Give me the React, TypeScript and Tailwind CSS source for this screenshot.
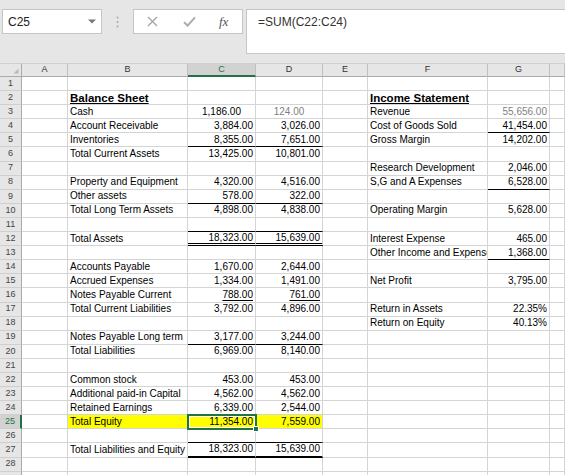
import React from 'react';

type Cell = {
  v?: string;
  a?: 'l' | 'r' | 'c';
  b?: boolean; // bold heading
  g?: boolean; // gray text
  bb?: 't' | 'd' | 'k'; // bottom border: thin, double, thick
  u?: boolean; // text underline
  y?: boolean; // yellow fill
};

const cols = ['A', 'B', 'C', 'D', 'E', 'F', 'G', 'H'];
const ROWS = 29;

const n = (v: string, extra: Partial<Cell> = {}): Cell => ({ v, a: 'r', ...extra });
const t = (v: string, extra: Partial<Cell> = {}): Cell => ({ v, a: 'l', ...extra });

const data: Record<number, Record<string, Cell>> = {
  2: { B: t('Balance Sheet', { b: true }), F: t('Income Statement', { b: true }) },
  3: { B: t('Cash'), C: { v: '1,186.00', a: 'c' }, D: { v: '124.00', a: 'c', g: true }, F: t('Revenue'), G: n('55,656.00', { g: true }) },
  4: { B: t('Account Receivable'), C: n('3,884.00'), D: n('3,026.00'), F: t('Cost of Goods Sold'), G: n('41,454.00', { bb: 't' }) },
  5: { B: t('Inventories'), C: n('8,355.00', { bb: 't' }), D: n('7,651.00', { bb: 't' }), F: t('Gross Margin'), G: n('14,202.00') },
  6: { B: t('Total Current Assets'), C: n('13,425.00'), D: n('10,801.00') },
  7: { F: t('Research Development'), G: n('2,046.00') },
  8: { B: t('Property and Equipment'), C: n('4,320.00'), D: n('4,516.00'), F: t('S,G and A Expenses'), G: n('6,528.00', { bb: 't' }) },
  9: { B: t('Other assets'), C: n('578.00', { bb: 't' }), D: n('322.00', { bb: 't' }) },
  10: { B: t('Total Long Term Assets'), C: n('4,898.00'), D: n('4,838.00'), F: t('Operating Margin'), G: n('5,628.00') },
  11: { C: { bb: 't' }, D: { bb: 't' } },
  12: { B: t('Total Assets'), C: n('18,323.00', { bb: 'd' }), D: n('15,639.00', { bb: 'd' }), F: t('Interest Expense'), G: n('465.00') },
  13: { F: t('Other Income and Expenses'), G: n('1,368.00', { bb: 't' }) },
  14: { B: t('Accounts Payable'), C: n('1,670.00'), D: n('2,644.00') },
  15: { B: t('Accrued Expenses'), C: n('1,334.00'), D: n('1,491.00'), F: t('Net Profit'), G: n('3,795.00') },
  16: { B: t('Notes Payable Current'), C: n('788.00', { u: true }), D: n('761.00', { u: true }) },
  17: { B: t('Total Current Liabilities'), C: n('3,792.00'), D: n('4,896.00'), F: t('Return in Assets'), G: n('22.35%') },
  18: { F: t('Return on Equity'), G: n('40.13%') },
  19: { B: t('Notes Payable Long term'), C: n('3,177.00', { bb: 't' }), D: n('3,244.00', { bb: 't' }) },
  20: { B: t('Total Liabilities'), C: n('6,969.00'), D: n('8,140.00') },
  22: { B: t('Common stock'), C: n('453.00'), D: n('453.00') },
  23: { B: t('Additional paid-in Capital'), C: n('4,562.00'), D: n('4,562.00') },
  24: { B: t('Retained Earnings'), C: n('6,339.00'), D: n('2,544.00') },
  25: { B: t('Total Equity', { y: true }), C: n('11,354.00', { y: true }), D: n('7,559.00', { y: true }) },
  26: { C: { bb: 't' }, D: { bb: 't' } },
  27: { B: t('Total Liabilities and Equity'), C: n('18,323.00', { bb: 'k' }), D: n('15,639.00', { bb: 'k' }) },
};

const bottomBorder = {
  t: 'border-b border-b-black',
  d: 'border-b-[3px] border-double border-b-black',
  k: 'border-b-2 border-b-black',
};

const align = {
  l: 'justify-start pl-[2px]',
  r: 'justify-end pr-[2px]',
  c: 'justify-center',
};

function DataCell({ cell }: { cell?: Cell }) {
  const border = cell?.bb ? bottomBorder[cell.bb] : 'border-b border-b-[#d4d4d4]';
  return (
    <div
      className={`relative flex items-center whitespace-nowrap overflow-hidden border-r border-r-[#d4d4d4] text-[10px] leading-[12px] ${border} ${
        align[cell?.a ?? 'l']
      } ${cell?.y ? 'bg-[#ffff00]' : 'bg-white'} ${cell?.g ? 'text-[#7f7f7f]' : 'text-black'}`}
    >
      {cell?.v && (
        <span
          className={`${cell.b ? 'font-bold text-[11.5px] underline underline-offset-[1px] decoration-[1.5px]' : ''} ${
            cell.u ? 'underline underline-offset-[2px]' : ''
          }`}
        >
          {cell.v}
        </span>
      )}
    </div>
  );
}

function FormulaBar() {
  return (
    <div className="h-[63px] bg-[#e6e6e6] flex items-start pt-[9px] pl-[2px] font-['Liberation_Sans',Arial,sans-serif]">
      <div className="w-[100px] h-[25px] bg-white border border-[#c6c6c6] flex items-center justify-between pl-[5px] pr-[5px]">
        <span className="text-[12px] text-[#222]">C25</span>
        <svg width="8" height="5" viewBox="0 0 8 5">
          <path d="M0 0.5H8L4 4.5Z" fill="#777" />
        </svg>
      </div>
      <div className="w-[31px] h-[25px] flex items-center justify-center">
        <svg width="3" height="12" viewBox="0 0 3 12">
          <circle cx="1.5" cy="1.5" r="1" fill="#a9a9a9" />
          <circle cx="1.5" cy="6" r="1" fill="#a9a9a9" />
          <circle cx="1.5" cy="10.5" r="1" fill="#a9a9a9" />
        </svg>
      </div>
      <div className="w-[110px] h-[25px] bg-white border border-[#c6c6c6] flex items-center pl-[13px]">
        <svg width="11" height="11" viewBox="0 0 11 11">
          <path d="M1 1L10 10M10 1L1 10" stroke="#a6a6a6" strokeWidth="1.4" />
        </svg>
        <svg className="ml-[25px]" width="13" height="11" viewBox="0 0 13 11">
          <path d="M1 6.2L4.6 9.6L12 1.4" stroke="#acacac" strokeWidth="2" fill="none" />
        </svg>
        <span className="ml-[23px] font-['Liberation_Serif',serif] italic text-[13px] text-[#555] leading-none">fx</span>
      </div>
      <div className="ml-[3px] flex-1 h-[45px] bg-white border border-[#c6c6c6] border-r-0 pl-[11px] pt-[5px] text-[12px] leading-[14px] text-[#333]">
        =SUM(C22:C24)
      </div>
    </div>
  );
}

export default function App() {
  const rows = Array.from({ length: ROWS }, (_, i) => i + 1);
  return (
    <div className="w-[565px] h-[475px] overflow-hidden bg-white font-['Liberation_Sans',Arial,sans-serif]">
      <FormulaBar />
      <div className="grid grid-cols-[22px_46px_120px_68px_67px_45px_120px_62px_1fr] grid-rows-[14px_repeat(29,14.1px)]">
        {/* corner */}
        <div className="relative bg-[#e6e6e6] border-t border-t-[#d0d0d0] border-r border-r-[#ababab] border-b border-b-[#ababab]">
          <svg className="absolute left-[13px] top-[4px]" width="6" height="6" viewBox="0 0 6 6">
            <path d="M5.5 0.5V5.5H0.5Z" fill="#b9b9b9" />
          </svg>
        </div>
        {cols.map((c) => (
          <div
            key={c}
            className={`flex items-center justify-center text-[9px] border-t border-t-[#d0d0d0] border-r border-r-[#c0c0c0] ${
              c === 'C'
                ? 'bg-[#d2d2d2] text-[#217346] border-b-2 border-b-[#217346]'
                : 'bg-[#e6e6e6] text-[#333] border-b border-b-[#ababab]'
            }`}
          >
            {c === 'H' ? '' : c}
          </div>
        ))}
        {rows.map((r) => (
          <React.Fragment key={r}>
            <div
              className={`flex items-center justify-center text-[9px] border-b border-b-[#cfcfcf] ${
                r === 25
                  ? 'bg-[#d2d2d2] text-[#217346] border-r-2 border-r-[#217346]'
                  : 'bg-[#e6e6e6] text-[#444] border-r border-r-[#ababab]'
              }`}
            >
              {r < ROWS ? r : ''}
            </div>
            {cols.map((c) => {
              const cell = data[r]?.[c];
              const sel = r === 25 && c === 'C';
              if (!sel) return <DataCell key={c} cell={cell} />;
              return (
                <div key={c} className="relative grid">
                  <DataCell cell={cell} />
                  <div className="absolute -left-[1px] -top-[1px] -right-[1px] -bottom-[1px] z-10 border-2 border-[#217346] shadow-[inset_0_0_0_1px_#ffffff]" />
                  <div className="absolute -right-[3px] -bottom-[3px] z-20 w-[6px] h-[6px] bg-[#217346] border border-white" />
                </div>
              );
            })}
          </React.Fragment>
        ))}
      </div>
    </div>
  );
}
